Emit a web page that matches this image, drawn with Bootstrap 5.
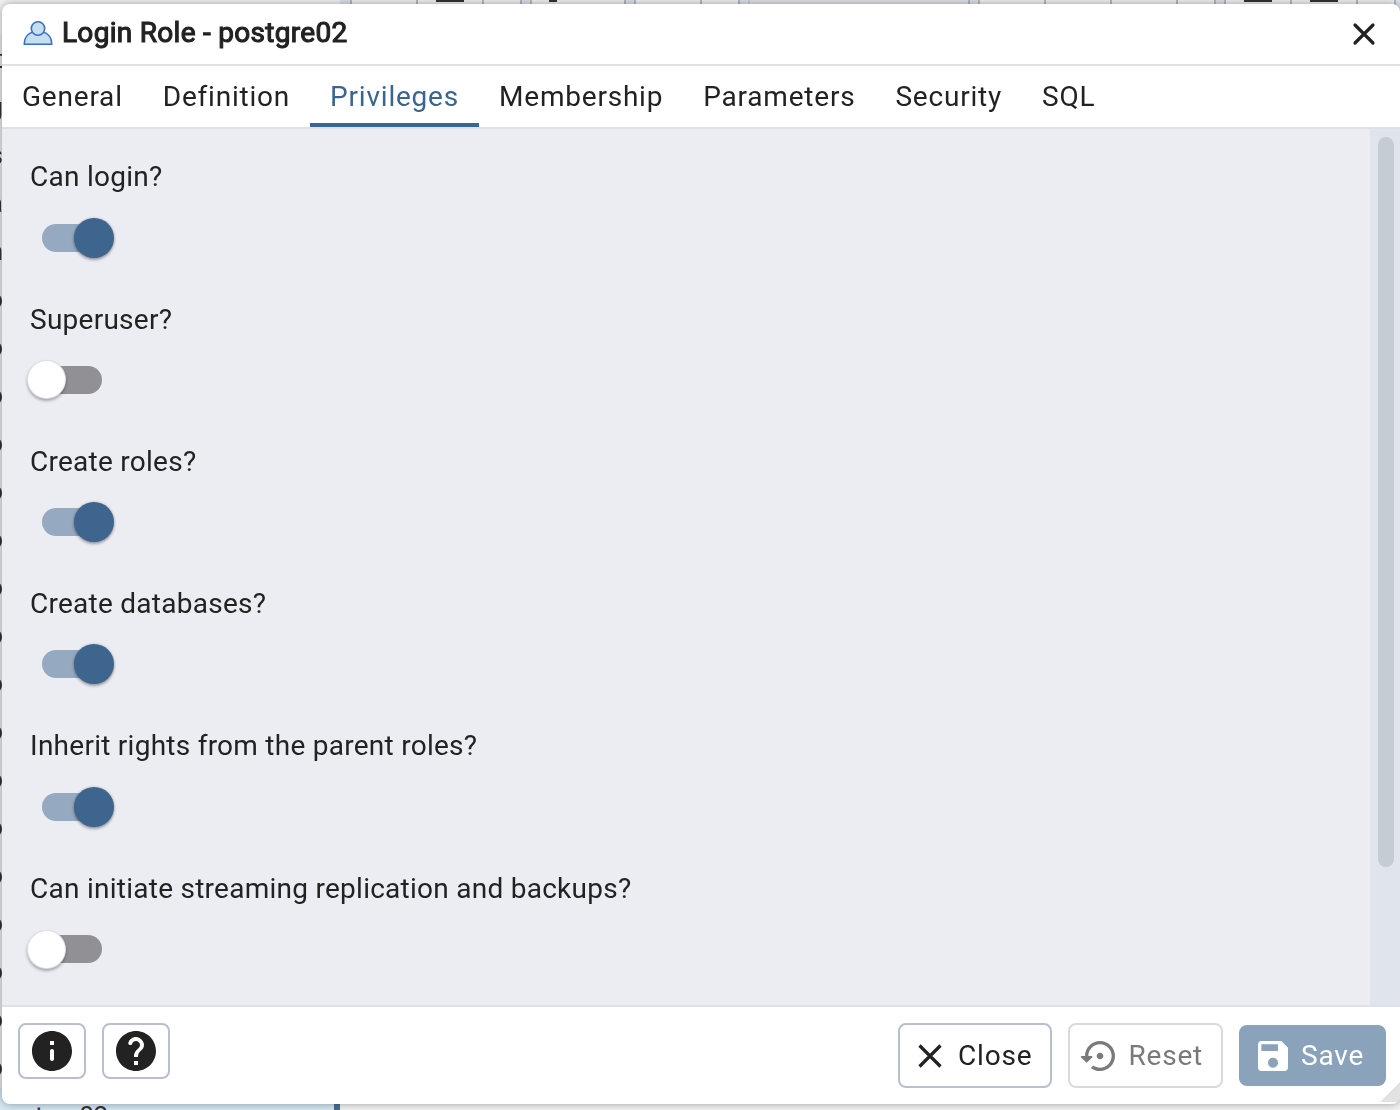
<!DOCTYPE html>
<html lang="en">
<head>
<meta charset="utf-8">
<title>Login Role - postgre02</title>
<link rel="stylesheet" href="https://cdn.jsdelivr.net/npm/bootstrap@5.3.0/dist/css/bootstrap.min.css">
<script src="https://cdn.jsdelivr.net/npm/bootstrap@5.3.0/dist/js/bootstrap.bundle.min.js"></script>
<style>
body{width:1400px;height:1110px;overflow:hidden;background:#f4f4f4;font-family:Roboto,"Liberation Sans",sans-serif;font-size:28px;line-height:42px;color:#222}
/* workspace behind the dialog */
.workspace{inset:0;overflow:hidden}
.toolstrip{height:12px;margin-left:340px}
.seg{border-left:2px solid #b3b9c6;height:12px;background:#f2f2f2}
.seg.gap-seg{background:#dfe2ea}
.seg.field-seg{background:#e4e5e9;border-color:#cdd1db}
.ink{height:2px;background:#333}
.tree{left:0;top:35px;width:3px;overflow:hidden;background:#ececec;height:1053px;direction:rtl;will-change:transform}
.tree div{height:48px;line-height:48px;font-size:26px;color:#333;white-space:nowrap}
.tree-selected{left:0;top:1088px;width:340px;height:22px;background:#d6e8f3;border-right:6px solid #4a6d94;overflow:hidden}
.tree-selected span{display:block;line-height:32px;font-size:26px;margin:12px 0 0 -7px;letter-spacing:-.3px;color:#333}
/* dialog */
.dlg{left:2px;top:4px;width:1398px;height:1100px;background:#fff;border-radius:8px;box-shadow:0 0 9px rgba(0,0,0,.38);overflow:hidden}
.dlg-head{height:62px;border-bottom:2px solid #dfe1e7;padding:0 20px 0 20px}
.dlg-title{font-weight:400;-webkit-text-stroke:1.1px #222;letter-spacing:.29px;margin:-2px 0 0 8px}
.dlg-tabs{height:63px;border-bottom:2px solid #dde0e6}
.dlg-tabs .nav-link{color:#222;padding:10px 20px 0;height:61px;line-height:42px;letter-spacing:.79px;border-radius:0}
.dlg-tabs .nav-link.active{color:#3a6591;border-bottom:4px solid #3a6591}
.dlg-body{height:876px;background:#ecedf3}
.fields{padding:27.250px 0 0 28px}
.field{height:142.3px;letter-spacing:.26px}
.toggle{width:90px;height:40px;margin:19.3px 0 0 -4px}
.rail{left:16px;top:6px;width:60px;height:28px;border-radius:14px;background:#919195}
.knob{left:1.5px;top:1.5px;width:37px;height:37px;border-radius:50%;background:#fff;box-shadow:0 0 0 1px #dfe0e6,0 2px 3px 1px rgba(0,0,0,.3)}
.is-on .rail{background:#95a9c0}
.is-on .knob{left:48px;top:0;width:40px;height:40px;background:#3e658d;box-shadow:0 2px 3px rgba(0,0,0,.3),0 0 3px rgba(0,0,0,.2)}
.scroller{width:30px;background:#e0e4ed;padding:8px 6px 0 8px}
.scroll-thumb{height:730px;border-radius:8px;background:#c5ccd4}
.dlg-foot{height:97px;border-top:2px solid #dfe1e8;padding:16px 14px 0 16px}
.dlg-foot .btn{font-size:28px;line-height:40px;border:2px solid #b9bfce;border-radius:8px;padding:0;color:#222;letter-spacing:.8px}
.dlg-foot .icon-btn{width:68px;height:56px}
.dlg-foot .txt-btn{height:65px}
.dlg-foot .btn:disabled{opacity:1;border-color:#d7dbe0;color:#7a7a7a}
.dlg-foot .save-btn:disabled{height:61px;margin-top:2px;background:#8ba2bb;border-color:#8ba2bb;color:#fff}
.close-btn{width:154px}
.reset-btn{width:155px}
.save-btn{width:147px}
.grip{right:0;bottom:2px;width:20px;height:20px;background:#e2e2e2;clip-path:polygon(100% 0,100% 100%,0 100%)}
</style>
</head>
<body class="position-relative">
<div class="workspace position-absolute">
  <div class="toolstrip d-flex" id="strip"></div>
  <div class="tree position-absolute" id="tree"></div>
  <div class="tree-selected position-absolute"><span>postgre02</span></div>
</div>

<div class="dlg position-absolute d-flex flex-column">
  <header class="dlg-head d-flex align-items-center flex-shrink-0">
    <svg width="32" height="30" viewBox="0 0 32 30" fill="#c6dfef" stroke="#3c6dc0" stroke-width="1.6"><path d="M2.300 25.200C2.300 17.500 7 12.500 16 12.500S29.700 17.500 29.700 25.200z"/><circle cx="16" cy="9.500" r="6.700"/></svg>
    <span class="dlg-title">Login Role - postgre02</span>
    <svg class="ms-auto me-1" width="24" height="24" viewBox="0 0 24 24" stroke="#222" stroke-width="3.200" stroke-linecap="round"><path d="M3 3l18 18M21 3L3 21"/></svg>
  </header>
  <nav class="dlg-tabs nav flex-nowrap flex-shrink-0">
    <a class="nav-link">General</a><a class="nav-link">Definition</a><a class="nav-link active">Privileges</a><a class="nav-link">Membership</a><a class="nav-link">Parameters</a><a class="nav-link">Security</a><a class="nav-link">SQL</a>
  </nav>
  <main class="dlg-body d-flex flex-shrink-0 overflow-hidden">
    <div class="fields flex-grow-1">
      <div class="field">Can login?<div class="toggle is-on position-relative"><div class="rail position-absolute"></div><div class="knob position-absolute"></div></div></div>
      <div class="field">Superuser?<div class="toggle position-relative"><div class="rail position-absolute"></div><div class="knob position-absolute"></div></div></div>
      <div class="field">Create roles?<div class="toggle is-on position-relative"><div class="rail position-absolute"></div><div class="knob position-absolute"></div></div></div>
      <div class="field">Create databases?<div class="toggle is-on position-relative"><div class="rail position-absolute"></div><div class="knob position-absolute"></div></div></div>
      <div class="field">Inherit rights from the parent roles?<div class="toggle is-on position-relative"><div class="rail position-absolute"></div><div class="knob position-absolute"></div></div></div>
      <div class="field">Can initiate streaming replication and backups?<div class="toggle position-relative"><div class="rail position-absolute"></div><div class="knob position-absolute"></div></div></div>
    </div>
    <div class="scroller"><div class="scroll-thumb"></div></div>
  </main>
  <footer class="dlg-foot d-flex align-items-start gap-3">
    <button class="btn icon-btn d-flex align-items-center justify-content-center"><svg width="48" height="48" viewBox="0 0 24 24" fill="#222"><path d="M12 2C6.480 2 2 6.480 2 12s4.480 10 10 10 10-4.480 10-10S17.520 2 12 2zm0 15c-.55 0-1-.45-1-1v-4c0-.55.45-1 1-1s1 .45 1 1v4c0 .55-.45 1-1 1zm1-8h-2V7h2v2z"/></svg></button>
    <button class="btn icon-btn d-flex align-items-center justify-content-center"><svg width="48" height="48" viewBox="0 0 24 24" fill="#222"><path d="M12 2C6.480 2 2 6.480 2 12s4.480 10 10 10 10-4.480 10-10S17.520 2 12 2zm1 17h-2v-2h2v2zm2.070-7.750l-.9.920c-.5.510-.86.970-1.040 1.690-.08.320-.13.680-.13 1.140h-2v-.5c0-.46.080-.9.220-1.310.2-.58.530-1.100.950-1.520l1.240-1.260c.46-.44.680-1.100.550-1.800-.13-.72-.69-1.330-1.390-1.530-1.110-.31-2.140.320-2.470 1.270-.12.370-.43.650-.82.650h-.3C8.400 9 8 8.440 8.160 7.880c.43-1.470 1.680-2.590 3.230-2.830 1.520-.24 2.970.550 3.870 1.800 1.180 1.630.830 3.380-.19 4.400z"/></svg></button>
    <button class="btn txt-btn close-btn ms-auto d-flex align-items-center"><svg style="margin:0 16px 0 18px" width="24" height="24" viewBox="0 0 24 24" stroke="#222" stroke-width="3.200"><path d="M1.500 1.500l21 21M22.500 1.500l-21 21"/></svg>Close</button>
    <button class="btn txt-btn reset-btn d-flex align-items-center" disabled><svg style="margin:0 8.500px 0 10px" width="40" height="40" viewBox="0 0 24 24" fill="#7a7a7a"><path d="M14 12c0-1.100-.9-2-2-2s-2 .9-2 2 .9 2 2 2 2-.9 2-2zm-2-9c-4.970 0-9 4.030-9 9H1c-.45 0-.67.540-.35.850L4 16l3.350-3.150c.32-.31.100-.85-.35-.85H5c0-3.870 3.130-7 7-7s7 3.130 7 7-3.130 7-7 7c-1.510 0-2.910-.49-4.060-1.300l-1.420 1.440C8.040 20.300 9.940 21 12 21c4.970 0 9-4.030 9-9s-4.030-9-9-9z"/></svg>Reset</button>
    <button class="btn txt-btn save-btn d-flex align-items-center" disabled><svg style="margin:0 8px 0 12px" width="40" height="40" viewBox="0 0 24 24" fill="#fff"><path d="M17 3H5c-1.110 0-2 .9-2 2v14c0 1.100.890 2 2 2h14c1.100 0 2-.9 2-2V7l-4-4zm-5 16c-1.660 0-3-1.340-3-3s1.340-3 3-3 3 1.340 3 3-1.340 3-3 3zm3-10H5V5h10v4z"/></svg>Save</button>
  </footer>
  <div class="grip position-absolute"></div>
</div>
<script>
// toolbar cells: [start x, kind, offset and width of the icon inside]
var cells=[[340,'g'],[350,'',0,0],[416,'',18,28],[482,''],[520,'g'],[530,'',17,8],[624,'g'],[634,''],[700,''],[738,'g'],[748,'f'],[968,'g'],[978,''],[1044,''],[1110,''],[1176,''],[1214,'g'],[1224,'',18,28],[1290,'',18,28],[1356,''],[1394,'g'],[1400]];
var h='';
for(var i=0;i<cells.length-1;i++){var c=cells[i];
 h+='<div class="seg '+(c[1]=='g'?'gap-seg':c[1]=='f'?'field-seg':'')+'" style="width:'+(cells[i+1][0]-c[0])+'px'+(i==0?';border:0':'')+'">'+(c[3]?'<div class="ink" style="margin-left:'+c[2]+'px;width:'+c[3]+'px"></div>':'')+'</div>';}
document.getElementById('strip').innerHTML=h;
// ends of the tree labels, cut off by the dialog
var t='';'tgsanooooooooooooooooo'.split('').forEach(function(ch){t+='<div>'+ch+'</div>';});
document.getElementById('tree').innerHTML=t;
</script>
</body>
</html>
